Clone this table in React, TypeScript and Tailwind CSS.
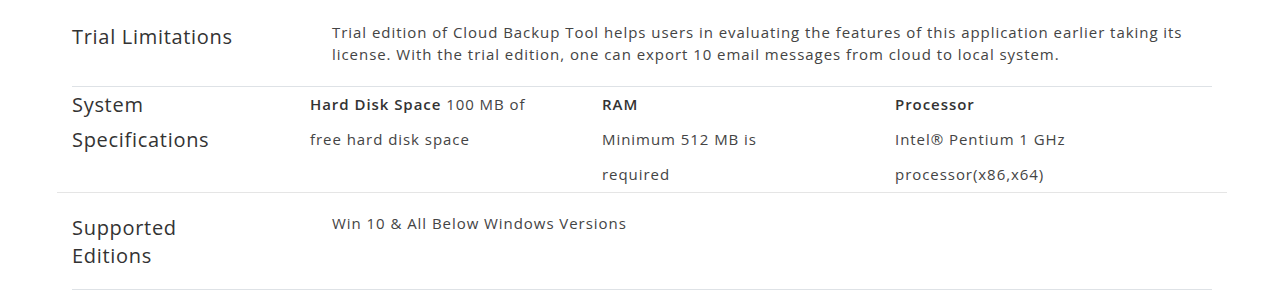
import React from "react";

const font = { fontFamily: '"Open Sans", "Noto Sans", sans-serif' };

export default function App() {
  return (
    <div className="w-full h-[308px] bg-white" style={font}>
      <div className="mx-auto w-[1140px]">
        {/* Trial limitations */}
        <div className="flex border-b border-[#dee2e6]">
          <div className="w-[260px] pt-[25px] text-[20px] leading-[24px] tracking-[0.7px] text-[#333]">Trial Limitations</div>
          <div className="flex-1 pt-[21px] pb-[21px] text-[15px] leading-[22px] tracking-[0.95px] text-[#444]">
            Trial edition of Cloud Backup Tool helps users in evaluating the features of this application earlier taking its
            <br />
            license. With the trial edition, one can export 10 email messages from cloud to local system.
          </div>
        </div>

        {/* System specs */}
        <div className="-mx-[15px] flex border-b border-[#e5e5e5] text-[15px] leading-[35px] tracking-[0.95px] text-[#444]">
          <div className="w-[253px] pl-[15px] text-[20px] tracking-[0.7px] text-[#333]">
            System
            <br />
            Specifications
          </div>
          <div className="w-[292px] pr-[20px]">
            <span className="font-semibold text-[#333]">Hard Disk Space</span> 100 MB of
            <br />
            free hard disk space
          </div>
          <div className="w-[293px] pr-[20px]">
            <div className="font-semibold text-[#333]">RAM</div>
            <div>
              Minimum 512 MB is
              <br />
              required
            </div>
          </div>
          <div className="flex-1 pr-[15px]">
            <div className="font-semibold text-[#333]">Processor</div>
            <div>
              Intel® Pentium 1 GHz
              <br />
              processor(x86,x64)
            </div>
          </div>
        </div>

        {/* Supported editions */}
        <div className="flex border-b border-[#dee2e6] pb-[19px]">
          <div className="w-[260px] pt-[21px] text-[20px] leading-[28px] tracking-[0.7px] text-[#333]">
            Supported
            <br />
            Editions
          </div>
          <div className="flex-1 pt-[19px] text-[15px] leading-[22px] tracking-[0.95px] text-[#444]">Win 10 &amp; All Below Windows Versions</div>
        </div>
      </div>
    </div>
  );
}
